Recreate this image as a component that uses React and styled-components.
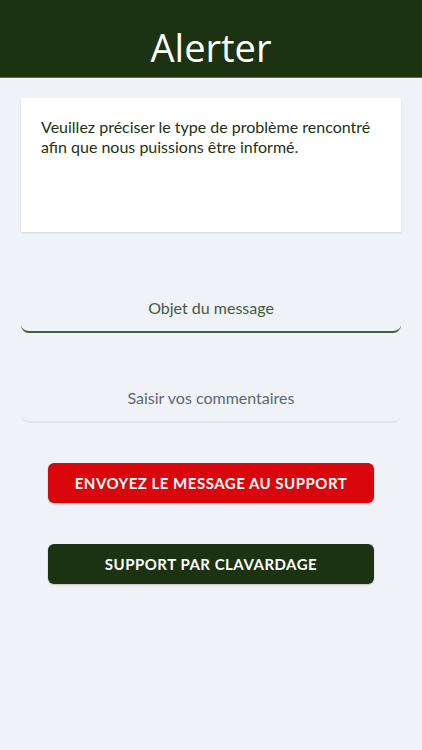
import React from 'react'
import styled, {createGlobalStyle} from 'styled-components'

const GlobalStyle = createGlobalStyle`
    html, body {
        margin: 0;
        padding: 0;
        background: #eff3f8;
    }
    body {
        font-family: Lato, "Noto Sans", sans-serif;
    }
`

const Page = styled.div`
    min-height: 750px;
    background: #eff3f8;
`

const Header = styled.header`
    height: 77px;
    background: #1b3311;
    border-bottom: 1px solid #5b6e52;
    display: flex;
    align-items: flex-end;
    justify-content: center;
`

const Title = styled.h1`
    margin: 0 0 4px;
    color: #ffffff;
    font-family: "Open Sans", sans-serif;
    font-weight: 400;
    font-size: 38px;
    line-height: 52px;
`

const Content = styled.main`
    padding: 20px 21px 0;
    display: flex;
    flex-direction: column;
`

const Card = styled.section`
    background: #ffffff;
    height: 134px;
    padding: 19px 20px;
    box-sizing: border-box;
    box-shadow: 0 1px 2px rgba(0, 0, 0, 0.12);
`

const Intro = styled.p`
    margin: 0;
    color: #1b3311;
    font-size: 16px;
    line-height: 20px;
`

const Field = styled.input`
    display: block;
    width: 100%;
    box-sizing: border-box;
    height: 48px;
    margin-top: ${p => p.$top}px;
    border: none;
    border-bottom: ${p => p.$active ? '2px solid #46593f' : '2px solid #e1e5ea'};
    border-radius: 0 0 8px 8px;
    background: transparent;
    text-align: center;
    font-family: Lato, "Noto Sans", sans-serif;
    font-size: 16px;
    outline: none;
    padding: 0 0 2px;

    &::placeholder {
        color: ${p => p.$active ? '#46593f' : '#5f6670'};
    }
`

const Button = styled.button`
    display: block;
    margin: ${p => p.$top}px 27px 0;
    height: 40px;
    border: none;
    border-radius: 6px;
    background: ${p => p.$color};
    color: #ffffff;
    font-family: Lato, "Noto Sans", sans-serif;
    font-weight: 700;
    font-size: 15px;
    letter-spacing: 0.5px;
    box-shadow: 0 1px 2px rgba(0, 0, 0, 0.2);
`

export default function App() {
    return (
        <Page>
            <GlobalStyle/>
            <Header>
                <Title>Alerter</Title>
            </Header>
            <Content>
                <Card>
                    <Intro>
                        Veuillez préciser le type de problème rencontré afin que nous puissions être informé.
                    </Intro>
                </Card>
                <Field $top={53} $active placeholder="Objet du message"/>
                <Field $top={42} placeholder="Saisir vos commentaires"/>
                <Button $top={40} $color="#d9060b">ENVOYEZ LE MESSAGE AU SUPPORT</Button>
                <Button $top={41} $color="#1b3311">SUPPORT PAR CLAVARDAGE</Button>
            </Content>
        </Page>
    )
}
